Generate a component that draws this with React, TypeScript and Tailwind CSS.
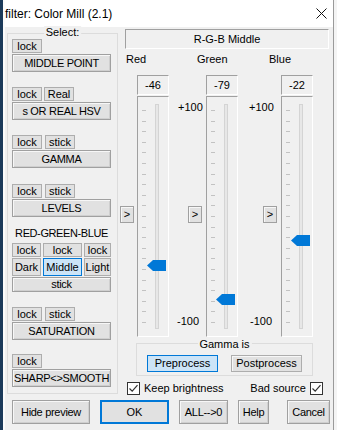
import React from "react";

type BtnProps = {
  children?: React.ReactNode;
  className?: string;
  active?: boolean;
};

// plain win32 style push button
function Btn({ children, className = "", active = false }: BtnProps) {
  const look = active
    ? "border border-[#0078d7] bg-[#cce4f7]"
    : "border border-[#adadad] bg-[#e1e1e1]";
  return (
    <div className={`flex items-center justify-center leading-none ${look} ${className}`}>
      {children}
    </div>
  );
}

// the wide section buttons have a double edge
function BigBtn({ children, className = "" }: BtnProps) {
  return (
    <div
      className={`flex h-[18px] items-center justify-center border border-[#a0a0a0] bg-[#e1e1e1] leading-none tracking-[-0.3px] shadow-[inset_1px_1px_0_#f7f7f7,inset_-1px_-1px_0_#cfcfcf] ${className}`}
    >
      {children}
    </div>
  );
}

function Check() {
  return (
    <div className="flex h-[13px] w-[13px] items-center justify-center border border-[#333] bg-white">
      <svg width="11" height="11" viewBox="0 0 11 11">
        <path d="M1.5 5.5 L4.2 8.2 L9.5 2.2" fill="none" stroke="#333" strokeWidth="1.2" />
      </svg>
    </div>
  );
}

function Arrow({ className = "" }: { className?: string }) {
  return (
    <div
      className={`flex h-[17px] w-[14px] items-center justify-center border border-[#a0a0a0] bg-[#e1e1e1] text-[11px] leading-none shadow-[inset_1px_1px_0_#f7f7f7] ${className}`}
    >
      &gt;
    </div>
  );
}

const ticks = Array.from({ length: 21 }, (_, i) => i);

function Slider({ value }: { value: number }) {
  // +100 sits at y 112, -100 at y 322 on the page, panel padding box starts at 97
  const thumbTop = 112 + (100 - value) * 1.05 - 97 - 5.5;
  return (
    <div className="flex w-[32px] flex-col">
      <div className="flex h-[20px] items-center justify-center border border-t-[#a0a0a0] border-l-[#a0a0a0] border-b-white border-r-white text-[11px] leading-none">
        {value}
      </div>
      <div className="relative mt-px flex h-[241px] items-start border border-t-[#a0a0a0] border-l-[#a0a0a0] border-b-white border-r-white">
        <div className="ml-[4px] mt-[13px] flex h-[213px] w-[4px] flex-col justify-between">
          {ticks.map((t) => (
            <div key={t} className="h-px bg-[#c2c2c2]" />
          ))}
        </div>
        <div className="ml-[9px] mt-[7px] h-[225px] w-[4px] border border-[#d4d4d4] bg-[#e7e7e7]" />
        <svg
          className="absolute left-[9px]"
          style={{ top: thumbTop }}
          width="19"
          height="11"
          viewBox="0 0 19 11"
        >
          <polygon points="0,5.5 6,0 19,0 19,11 6,11" fill="#0078d7" />
        </svg>
      </div>
    </div>
  );
}

function SelectGroup() {
  return (
    <div className="relative ml-[2px] mt-[6px] h-[361px] w-[111px] border border-[#dcdcdc] pl-[4px] pr-[6px] pt-[5px]">
      <span className="absolute -top-[8px] left-1/2 -translate-x-1/2 bg-[#f0f0f0] px-[2px] leading-[13px]">
        Select:
      </span>

      <Btn className="h-[14px] w-[30px]">lock</Btn>
      <BigBtn className="mt-px">MIDDLE POINT</BigBtn>

      <div className="mt-[15px] flex gap-[2px]">
        <Btn className="h-[14px] w-[30px]">lock</Btn>
        <Btn className="h-[14px] w-[30px]">Real</Btn>
      </div>
      <BigBtn className="mt-px">s OR REAL HSV</BigBtn>

      <div className="mt-[15px] flex gap-[3px]">
        <Btn className="h-[14px] w-[30px]">lock</Btn>
        <Btn className="h-[14px] w-[30px]">stick</Btn>
      </div>
      <BigBtn className="mt-px">GAMMA</BigBtn>

      <div className="mt-[16px] flex gap-[3px]">
        <Btn className="h-[14px] w-[30px]">lock</Btn>
        <Btn className="h-[14px] w-[30px]">stick</Btn>
      </div>
      <BigBtn className="mt-px">LEVELS</BigBtn>

      <p className="mt-[10px] text-center leading-[13px] tracking-[-0.4px]">RED-GREEN-BLUE</p>
      <div className="mt-[3px] flex gap-[2px]">
        <Btn className="h-[14px] w-[29px]">lock</Btn>
        <Btn className="h-[14px] w-[39px]">lock</Btn>
        <Btn className="h-[14px] w-[27px]">lock</Btn>
      </div>
      <div className="mt-px flex gap-[2px]">
        <Btn className="h-[18px] w-[29px]">Dark</Btn>
        <Btn active className="h-[18px] w-[39px]">
          Middle
        </Btn>
        <Btn className="h-[18px] w-[27px]">Light</Btn>
      </div>
      <BigBtn className="mt-px !h-[15px]">stick</BigBtn>

      <div className="mt-[15px] flex gap-[3px]">
        <Btn className="h-[14px] w-[30px]">lock</Btn>
        <Btn className="h-[14px] w-[30px]">stick</Btn>
      </div>
      <BigBtn className="mt-px">SATURATION</BigBtn>

      <Btn className="mt-[14px] h-[14px] w-[30px]">lock</Btn>
      <BigBtn className="mt-px">SHARP&lt;&gt;SMOOTH</BigBtn>
    </div>
  );
}

export default function App() {
  return (
    <div className="flex h-[430px] w-[337px] overflow-hidden bg-[#f0f0f0] font-['Liberation_Sans',Arial,sans-serif] text-[11px] text-black">
      <div className="w-[3px] bg-[#1b3a5a]" />
      <div className="flex w-[331px] flex-col border-l-2 border-r border-l-[#fbfbfb] border-r-[#9a9a9a]">
        <div className="flex h-[27px] items-center justify-between bg-white">
          <span className="text-[12px] leading-[14px]">filter: Color Mill (2.1)</span>
          <svg className="mr-[6px]" width="11" height="11" viewBox="0 0 11 11">
            <path d="M0.5 0.5 L10.5 10.5 M10.5 0.5 L0.5 10.5" stroke="#111" strokeWidth="1" />
          </svg>
        </div>

        <div className="flex">
          <SelectGroup />

          <div className="flex flex-1 flex-col">
            <div className="ml-[7px] mt-[2px] flex h-[20px] w-[204px] items-center justify-center border border-t-[#a0a0a0] border-l-[#a0a0a0] border-b-white border-r-white leading-none">
              R-G-B Middle
            </div>

            <div className="mt-[4px] flex leading-[13px]">
              <span className="ml-[8px] w-[71px]">Red</span>
              <span className="w-[72px]">Green</span>
              <span>Blue</span>
            </div>

            <div className="mt-[9px] flex items-start">
              <div className="flex w-[19px] flex-col">
                <Arrow className="ml-[2px] mt-[131px]" />
              </div>
              <Slider value={-46} />
              <div className="flex w-[37px] flex-col">
                <span className="mt-[25px] pl-[9px] leading-[14px]">+100</span>
                <Arrow className="ml-[19px] mt-[92px]" />
                <span className="mt-[91px] pl-[8px] leading-[14px]">-100</span>
              </div>
              <Slider value={-79} />
              <div className="flex w-[43px] flex-col">
                <span className="mt-[25px] pl-[11px] leading-[14px]">+100</span>
                <Arrow className="ml-[25px] mt-[92px]" />
                <span className="mt-[91px] pl-[12px] leading-[14px]">-100</span>
              </div>
              <Slider value={-22} />
            </div>

            <div className="relative ml-[18px] mt-[6px] flex h-[33px] w-[177px] gap-[13px] border border-[#dcdcdc] pl-[10px] pt-[11px]">
              <span className="absolute -top-[6px] left-1/2 -translate-x-1/2 bg-[#f0f0f0] px-[2px] leading-[13px]">
                Gamma is
              </span>
              <Btn active className="h-[17px] w-[71px]">
                Preprocess
              </Btn>
              <Btn className="h-[17px] w-[71px] shadow-[inset_1px_1px_0_#f7f7f7]">Postprocess</Btn>
            </div>

            <div className="mt-[6px] flex items-center justify-between pl-[9px] pr-[10px] leading-[13px]">
              <div className="flex items-center gap-[4px]">
                <Check />
                <span>Keep brightness</span>
              </div>
              <div className="flex items-center gap-[4px]">
                <span>Bad source</span>
                <Check />
              </div>
            </div>
          </div>
        </div>

        <div className="ml-[7px] mt-[5px] flex">
          <BigBtn className="!h-[24px] w-[78px]">Hide preview</BigBtn>
          <div className="ml-[10px] flex h-[24px] w-[69px] items-center justify-center border-2 border-[#0078d7] bg-[#e1e1e1] leading-none">
            OK
          </div>
          <BigBtn className="ml-[10px] !h-[24px] w-[49px]">ALL--&gt;0</BigBtn>
          <BigBtn className="ml-[10px] !h-[24px] w-[31px]">Help</BigBtn>
          <BigBtn className="ml-[18px] !h-[24px] w-[43px]">Cancel</BigBtn>
        </div>
      </div>
      <div className="flex-1 bg-[#f4f4f4]" />
    </div>
  );
}
